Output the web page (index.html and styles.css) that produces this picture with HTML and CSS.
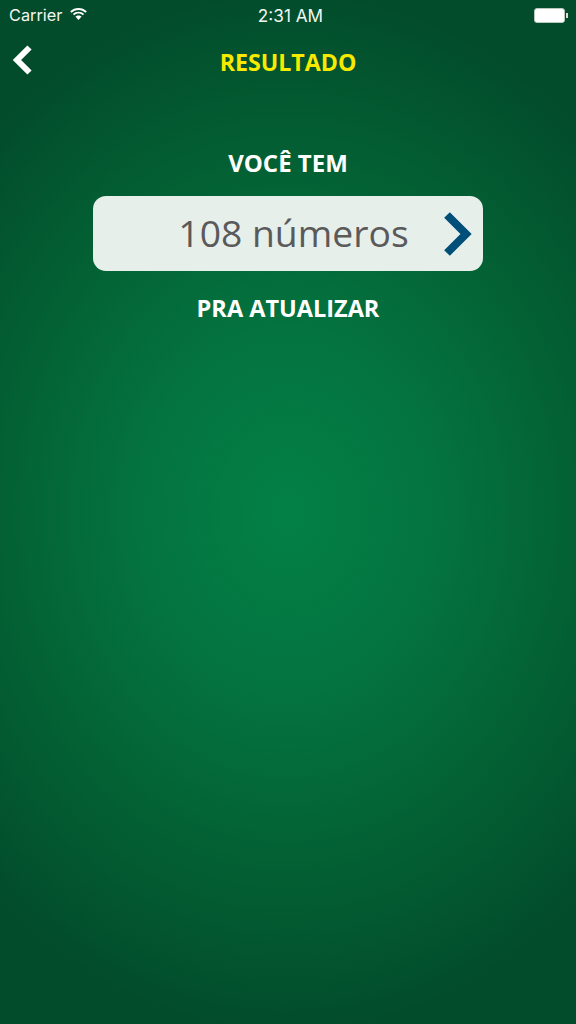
FILE: index.html
```html
<!DOCTYPE html>
<html lang="pt">
<head>
<meta charset="utf-8">
<title>Resultado</title>
<link rel="stylesheet" href="styles.css">
</head>
<body>
<div class="screen">
  <div class="status">
    <div class="status-left">
      <span>Carrier</span>
      <svg class="wifi" viewBox="0 0 17 12"><path d="M8.500 0C5.300 0 2.400 1.200.2 3.300l1.300 1.400C3.300 3 5.800 1.900 8.500 1.900s5.200 1.100 7 2.800l1.300-1.400C14.600 1.200 11.700 0 8.500 0z"/><path d="M8.500 3.700c-2.200 0-4.200.8-5.600 2.200l1.300 1.400C5.300 6.200 6.800 5.600 8.500 5.600s3.200.6 4.300 1.700l1.300-1.400C12.700 4.500 10.700 3.700 8.500 3.700z"/><path d="M8.500 7.400c-1.200 0-2.300.5-3.100 1.200L8.500 12l3.100-3.400c-.8-.7-1.900-1.200-3.100-1.200z"/></svg>
    </div>
    <span class="time">2:31 AM</span>
    <div class="status-right">
      <div class="battery"></div>
      <div class="battery-tip"></div>
    </div>
  </div>
  <header class="nav">
    <svg class="back" viewBox="0 0 20 30"><path d="M17.500 2.500 5 15l12.500 12.500" /></svg>
    <h1 class="title">RESULTADO</h1>
  </header>
  <main class="content">
    <p class="label">VOCÊ TEM</p>
    <div class="field">
      <span class="value">108 números</span>
      <svg class="chevron" viewBox="0 0 28 44"><path d="M3 3 22 22 3 41" /></svg>
    </div>
    <p class="label label-update">PRA ATUALIZAR</p>
  </main>
</div>
</body>
</html>
```
FILE: styles.css
```css
* { box-sizing: border-box; }
html, body { margin: 0; padding: 0; }
body { width: 576px; height: 1024px; overflow: hidden; }
.screen {
  width: 576px;
  height: 1024px;
  display: flex;
  flex-direction: column;
  color: #fff;
  background: radial-gradient(ellipse 430px 520px at 288px 512px, #038146 0%, #04733f 35%, #035f33 70%, #024c2b 100%);
  font-family: "Open Sans", sans-serif;
}
.status {
  height: 30px;
  padding: 0 8px 0 9px;
  display: flex;
  align-items: center;
  position: relative;
  justify-content: space-between;
  font-family: "Inter", "Liberation Sans", sans-serif;
  font-size: 16.300px;
  color: #f2f6f3;
}
.status-left { display: flex; align-items: center; gap: 8px; }
.wifi { width: 17px; height: 12px; fill: #fff; margin-top: -3px; }
.time { position: absolute; left: 5px; right: 0; text-align: center; font-size: 17.200px; }
.status-right { display: flex; align-items: center; }
.battery {
  width: 31px;
  height: 15px;
  background: #fff;
  border: 1.500px solid #b9cabd;
  border-radius: 3px;
}
.battery-tip { width: 2px; height: 5px; background: #d5e0d8; margin-left: 1px; }
.nav {
  height: 62px;
  display: flex;
  align-items: center;
  justify-content: center;
  position: relative;
}
.back {
  position: absolute;
  left: 12px;
  top: 15px;
  width: 20px;
  height: 30px;
  fill: none;
  stroke: #fff;
  stroke-width: 6;
}
.title {
  margin: 2px 0 0;
  font-size: 23.200px;
  font-weight: 700;
  color: #f7ea00;
  line-height: 30px;
}
.content {
  display: flex;
  flex-direction: column;
  align-items: center;
  padding-top: 55px;
}
.label {
  margin: 0;
  font-size: 24px;
  font-weight: 700;
  line-height: 32px;
}
.label-update { font-size: 23.500px; }
.field {
  width: 390px;
  height: 75px;
  margin-top: 17px;
  margin-bottom: 21px;
  background: #e7efeb;
  border-radius: 13px;
  position: relative;
  display: flex;
  align-items: center;
  justify-content: center;
  padding: 0 0 2px 11px;
}
.value {
  font-size: 37.300px;
  color: #5a5a5a;
  line-height: 1;
}
.chevron {
  position: absolute;
  right: 11px;
  top: 16px;
  width: 28px;
  height: 44px;
  fill: none;
  stroke: #004f78;
  stroke-width: 8;
}
```
